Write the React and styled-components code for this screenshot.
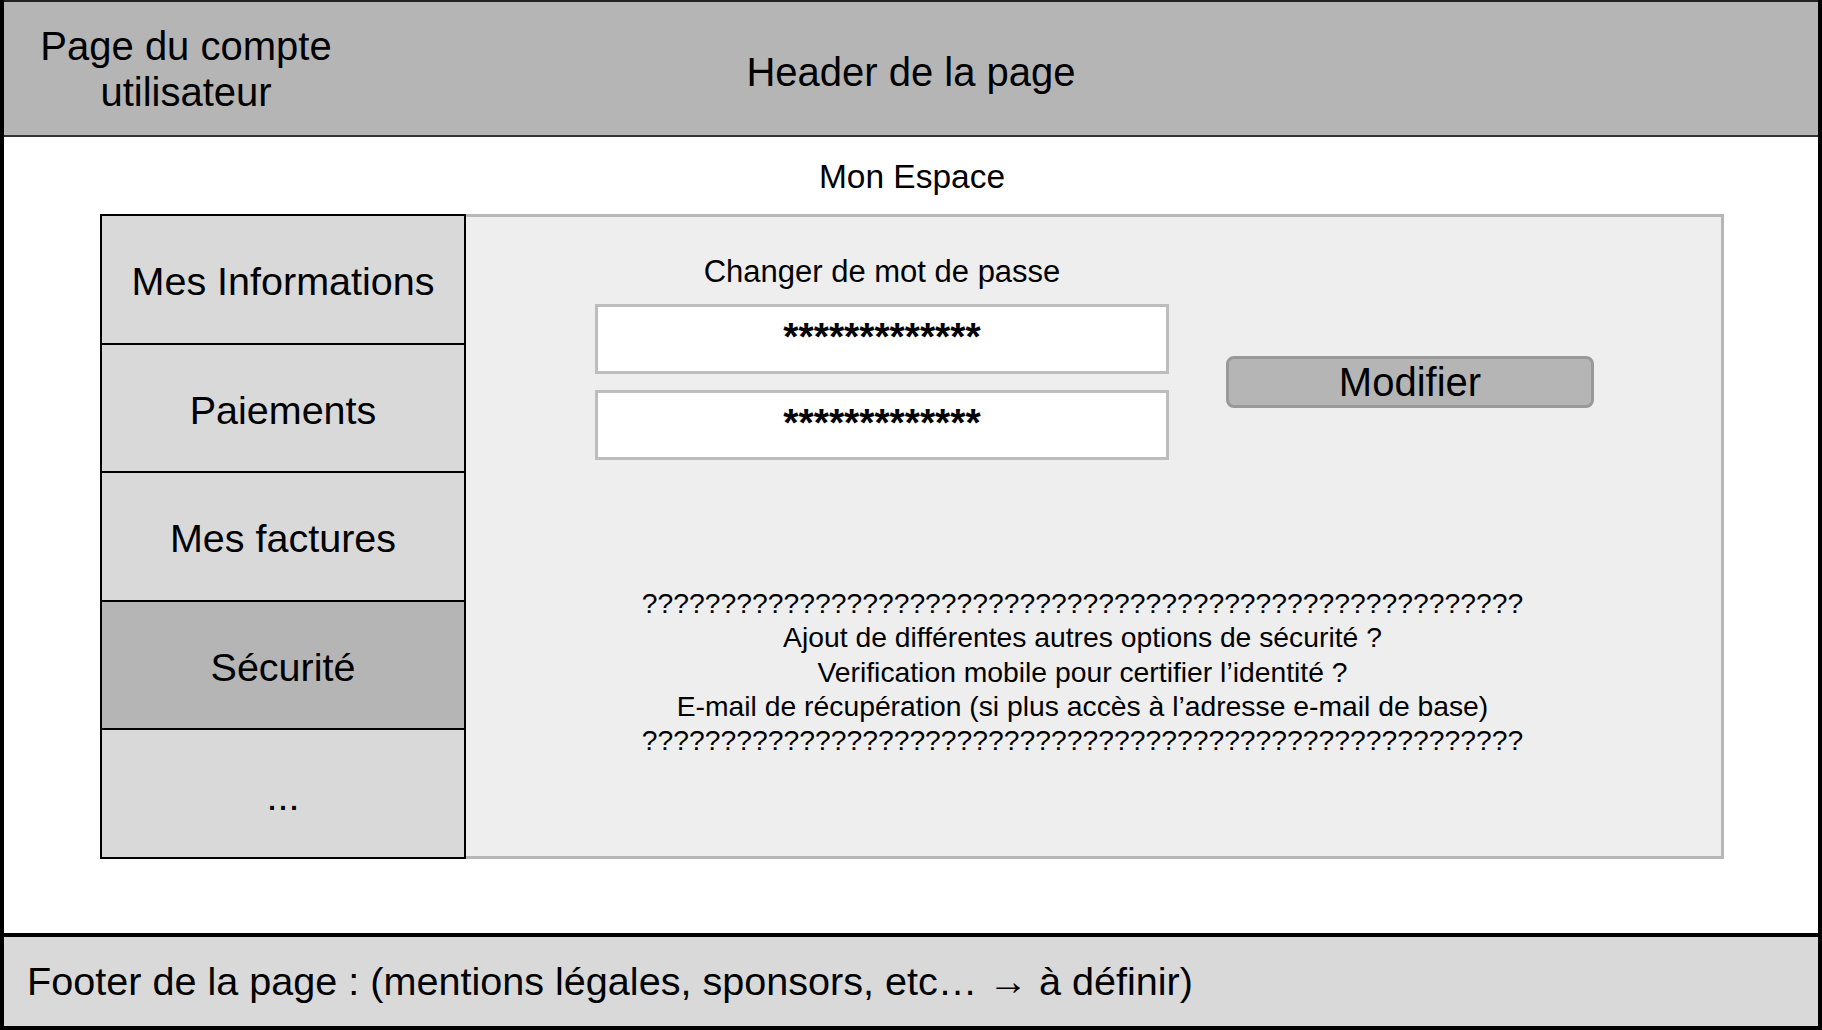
import styled, { createGlobalStyle } from "styled-components";

const GlobalStyle = createGlobalStyle`
  html, body {
    margin: 0;
    padding: 0;
  }
  body {
    font-family: "Liberation Sans", Arial, Helvetica, sans-serif;
    color: #000;
    background: #fff;
  }
  * {
    box-sizing: border-box;
  }
`;

const menu = [
  { label: "Mes Informations" },
  { label: "Paiements" },
  { label: "Mes factures" },
  { label: "Sécurité", active: true },
  { label: "..." },
];

const notes = [
  "?".repeat(56),
  "Ajout de différentes autres options de sécurité ?",
  "Verification mobile pour certifier l’identité ?",
  "E-mail de récupération (si plus accès à l’adresse e-mail de base)",
  "?".repeat(56),
];

export default function App() {
  return (
    <>
      <GlobalStyle />
      <Page>
        <Header>
          <PageName>
            Page du compte
            <br />
            utilisateur
          </PageName>
          <HeaderTitle>Header de la page</HeaderTitle>
        </Header>

        <Main>
          <SectionTitle>Mon Espace</SectionTitle>
          <Workspace>
            <Sidebar>
              {menu.map((item) => (
                <NavItem key={item.label} $active={item.active}>
                  {item.label}
                </NavItem>
              ))}
            </Sidebar>

            <Panel>
              <PasswordForm>
                <FormTitle>Changer de mot de passe</FormTitle>
                <Fields>
                  <Field>*************</Field>
                  <Field>*************</Field>
                </Fields>
                <SubmitButton type="button">Modifier</SubmitButton>
              </PasswordForm>

              <Notes>
                {notes.map((line, i) => (
                  <div key={i}>{line}</div>
                ))}
              </Notes>
            </Panel>
          </Workspace>
        </Main>

        <Footer>
          Footer de la page : (mentions légales, sponsors, etc… → à définir)
        </Footer>
      </Page>
    </>
  );
}

const Page = styled.div`
  height: 100vh;
  display: flex;
  flex-direction: column;
  border-left: 4px solid #000;
  border-right: 4px solid #000;
  border-bottom: 4px solid #000;
`;

const Header = styled.header`
  height: 137px;
  flex-shrink: 0;
  display: grid;
  grid-template-columns: 364px 1fr 364px;
  align-items: center;
  background: #b5b5b5;
  border-top: 2px solid #222;
  border-bottom: 2px solid #333;
`;

const PageName = styled.div`
  text-align: center;
  font-size: 40px;
  line-height: 46px;
`;

const HeaderTitle = styled.h1`
  margin: 0;
  padding-top: 7px;
  text-align: center;
  font-size: 40px;
  font-weight: normal;
  line-height: 46px;
`;

const Main = styled.main`
  flex: 1;
  display: flex;
  flex-direction: column;
  padding: 21px 94px 0 96px;
`;

const SectionTitle = styled.h2`
  margin: 0 0 18px;
  text-align: center;
  font-size: 33.5px;
  font-weight: normal;
  line-height: 38px;
`;

const Workspace = styled.div`
  display: flex;
  height: 645px;
`;

const Sidebar = styled.nav`
  width: 366px;
  display: flex;
  flex-direction: column;
  border: 2px solid #000;
`;

const NavItem = styled.div`
  flex: 1;
  display: flex;
  align-items: center;
  justify-content: center;
  padding-top: 5px;
  font-size: 39.5px;
  background: ${(p) => (p.$active ? "#b5b5b5" : "#d9d9d9")};

  & + & {
    border-top: 2px solid #000;
  }
`;

const Panel = styled.section`
  flex: 1;
  display: flex;
  flex-direction: column;
  padding-top: 38px;
  background: #eeeeee;
  border: 3px solid #b7b7b7;
  border-left: none;
`;

const PasswordForm = styled.div`
  display: grid;
  grid-template-columns: 574px 368px;
  column-gap: 57px;
  row-gap: 15px;
  margin-left: 129px;
`;

const FormTitle = styled.div`
  grid-column: 1;
  text-align: center;
  font-size: 31px;
  line-height: 34px;
`;

const Fields = styled.div`
  grid-column: 1;
  grid-row: 2;
  display: flex;
  flex-direction: column;
  gap: 16px;
`;

const Field = styled.div`
  height: 70px;
  padding-top: 7px;
  text-align: center;
  font-size: 39px;
  font-weight: bold;
  line-height: 45px;
  background: #fff;
  border: 3px solid #bdbdbd;
`;

const SubmitButton = styled.button`
  grid-column: 2;
  grid-row: 2;
  align-self: center;
  height: 52px;
  padding: 0;
  font-family: inherit;
  font-size: 40px;
  line-height: 1;
  color: #000;
  background: #b5b5b5;
  border: 3px solid #999;
  border-radius: 8px;
`;

const Notes = styled.div`
  margin-top: 126px;
  padding-right: 22px;
  text-align: center;
  font-size: 28.3px;
  line-height: 34.3px;
`;

const Footer = styled.footer`
  height: 93px;
  flex-shrink: 0;
  display: flex;
  align-items: center;
  padding-left: 23px;
  font-size: 39.6px;
  background: #d9d9d9;
  border-top: 4px solid #000;
`;
